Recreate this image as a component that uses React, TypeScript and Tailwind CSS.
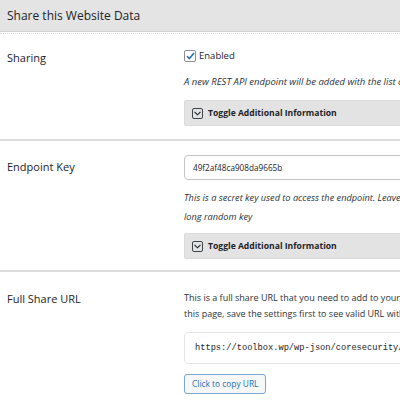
const font = "font-['Open_Sans',sans-serif]";

function ToggleBox() {
  return (
    <div className="flex h-[26px] items-center gap-[5px] rounded-[2px] border border-[#dadada] bg-[#e3e3e3] pl-[7px]">
      <span className="flex h-[11px] w-[11px] items-center justify-center rounded-[2px] border border-[#3c434a]">
        <svg width="7" height="5" viewBox="0 0 7 5" fill="none">
          <path d="M0.5 0.8 L3.5 3.8 L6.5 0.8" stroke="#1d2327" strokeWidth="1.1" />
        </svg>
      </span>
      <span className="text-[8.6px] font-bold text-[#1d2327]">Toggle Additional Information</span>
    </div>
  );
}

export default function App() {
  return (
    <div className={`h-[400px] w-[400px] overflow-hidden bg-white text-[#1d2327] ${font}`}>
      <div className="w-[640px]">
        <div className="flex h-[32px] items-center border-b border-[#d2d2d2] bg-[#e4e4e4] pl-[7px] text-[12px]">
          Share this Website Data
        </div>
        <div className="h-[2px] border-b border-dotted border-[#d8d8d8]" />

        {/* Sharing */}
        <div className="flex border-b-2 border-[#dcdcde] pb-[13px] pt-[15px]">
          <div className="w-[184px] shrink-0 pl-[7px] pt-[1px] text-[11px]">Sharing</div>
          <div className="flex-1">
            <label className="flex h-[14px] items-center gap-[3px] text-[9.5px]">
              <span className="flex h-[12px] w-[12px] items-center justify-center rounded-[2px] border border-[#8c8f94] bg-white">
                <svg width="9" height="8" viewBox="0 0 9 8" fill="none">
                  <path d="M1 4.2 L3.4 6.6 L8 1" stroke="#2271b1" strokeWidth="1.6" />
                </svg>
              </span>
              Enabled
            </label>
            <p className="mt-[12px] whitespace-nowrap text-[9.5px] italic text-[#2c3338]">
              A new REST API endpoint will be added with the list of plugins and themes on your website.
            </p>
            <div className="mt-[11px] w-[400px]">
              <ToggleBox />
            </div>
          </div>
        </div>

        {/* Endpoint key */}
        <div className="flex border-b-2 border-[#dcdcde] pb-[11px] pt-[14px]">
          <div className="w-[184px] shrink-0 pl-[7px] pt-[4px] text-[11px]">Endpoint Key</div>
          <div className="flex-1">
            <div className="flex h-[25px] w-[400px] items-center rounded-[4px] border border-[#c3c4c7] pl-[8px] text-[8.2px]">
              49f2af48ca908da9665b
            </div>
            <p className="mt-[8px] whitespace-nowrap text-[9.2px] italic leading-[19px] text-[#2c3338]">
              This is a secret key used to access the endpoint. Leave empty to generate new
              <br />
              long random key
            </p>
            <div className="mt-[7px] w-[400px]">
              <ToggleBox />
            </div>
          </div>
        </div>

        {/* Full share URL */}
        <div className="flex pt-[18px]">
          <div className="w-[184px] shrink-0 pl-[7px] pt-[1px] text-[11px]">Full Share URL</div>
          <div className="flex-1">
            <p className="whitespace-nowrap text-[9px] leading-[16px] text-[#2c3338]">
              This is a full share URL that you need to add to your Core Security dashboard. If you change key on
              <br />
              this page, save the settings first to see valid URL with new key.
            </p>
            <div className="mt-[10px] flex h-[32px] w-[400px] items-center rounded-[4px] border border-[#e6e6e6] pl-[10px] font-['Liberation_Mono',monospace] text-[8.7px]">
              https://toolbox.wp/wp-json/coresecurity/v1/share
            </div>
            <button className="mt-[10px] h-[20px] rounded-[3px] border border-[#7aa6cf] bg-[#f6f7f7] px-[7px] text-[8.4px] text-[#2271b1]">
              Click to copy URL
            </button>
          </div>
        </div>
      </div>
    </div>
  );
}
